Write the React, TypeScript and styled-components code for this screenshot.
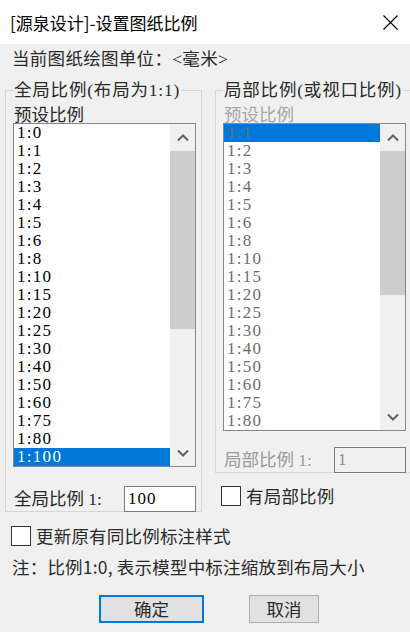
import React from "react";
import styled, { createGlobalStyle } from "styled-components";

const SERIF = `"Liberation Serif", "Noto Sans CJK SC", serif`;
const SANS = `"Noto Sans CJK SC", "Liberation Sans", sans-serif`;

const GlobalStyle = createGlobalStyle`
  html, body { margin: 0; padding: 0; background: #f0f0f0; }
  body { font-family: ${SANS}; }
  * { box-sizing: border-box; }
`;

const Dialog = styled.div`
  width: 410px;
  height: 632px;
  overflow: hidden;
  background: #f0f0f0;
  display: flex;
  flex-direction: column;
`;

const TitleBar = styled.div`
  height: 44px;
  flex: none;
  background: #fff;
  display: flex;
  align-items: center;
  justify-content: space-between;
  padding: 0 12px 0 10px;
`;

const Title = styled.div`
  font-family: ${SANS};
  font-size: 17px;
  line-height: 20px;
  color: #000;
  margin-top: 2px;
`;

const CloseIcon = styled.svg`
  width: 15px;
  height: 15px;
  margin-top: 1px;
`;

const UnitLine = styled.div`
  margin: 4px 0 0 12px;
  height: 22px;
  line-height: 22px;
  font-size: 17.5px;
  font-family: ${SERIF};
  letter-spacing: 0.3px;
  color: #2a2a2a;
`;

const GroupsRow = styled.div`
  display: flex;
  align-items: flex-start;
  gap: 13px;
  margin-top: 9px;
  padding-left: 5px;
`;

const Column = styled.div<{ $w: number }>`
  width: ${(p) => p.$w}px;
  flex: none;
  display: flex;
  flex-direction: column;
`;

const Group = styled.fieldset`
  margin: 0;
  padding: 0 0 0 7px;
  border: 1px solid #d6d6d6;
  min-width: 0;
  width: 100%;
`;

const Legend = styled.legend`
  padding: 0 1px;
  font-family: ${SERIF};
  font-size: 17.5px;
  line-height: 22px;
  letter-spacing: 0.8px;
  color: #2a2a2a;
`;

const Caption = styled.div<{ $disabled?: boolean }>`
  padding-top: 4px;
  height: 22px;
  line-height: 17px;
  font-size: 17.5px;
  padding-left: 1px;
  color: ${(p) => (p.$disabled ? "#a6a6a6" : "#2a2a2a")};
`;

const ListBox = styled.div`
  width: 183px;
  border: 1px solid #828790;
  background: #fff;
  display: flex;
`;

const Items = styled.div`
  flex: 1;
  display: flex;
  flex-direction: column;
`;

const Item = styled.div<{ $selected?: boolean; $disabled?: boolean }>`
  height: 18px;
  line-height: 18px;
  padding-left: 3px;
  font-family: ${SERIF};
  font-size: 17px;
  letter-spacing: 1.3px;
  color: ${(p) =>
    p.$disabled ? "#6d6d6d" : p.$selected ? "#fff" : "#000"};
  background: ${(p) => (p.$selected ? "#0078d7" : "transparent")};
`;

const ScrollBar = styled.div`
  width: 25px;
  flex: none;
  background: #f0f0f0;
  display: flex;
  flex-direction: column;
`;

const ArrowBtn = styled.div`
  height: 27px;
  flex: none;
  display: flex;
  align-items: center;
  justify-content: center;
`;

const Thumb = styled.div`
  flex: none;
  background: #cdcdcd;
`;

const Track = styled.div`
  flex: 1;
`;

const FieldRow = styled.div<{ $gap: number }>`
  display: flex;
  align-items: center;
  justify-content: space-between;
  width: 183px;
  margin-top: ${(p) => p.$gap}px;
  padding-left: 1px;
  margin-bottom: -1px;
`;

const FieldLabel = styled.span<{ $disabled?: boolean }>`
  font-family: ${SERIF};
  font-size: 17.5px;
  line-height: 22px;
  color: ${(p) => (p.$disabled ? "#9a9a9a" : "#2a2a2a")};
`;

const TextInput = styled.input`
  width: 72px;
  height: 26px;
  border: 1px solid #7a7a7a;
  background: #fff;
  padding: 0 0 0 3px;
  margin: 0;
  font-family: ${SERIF};
  font-size: 17px;
  letter-spacing: 1px;
  color: #000;
  outline: none;
  &:disabled {
    background: #f0f0f0;
    color: #8a8a8a;
    border-color: #7a7a7a;
  }
`;

const CheckRow = styled.label<{ $mt: number; $ml: number }>`
  display: flex;
  align-items: center;
  gap: 5px;
  margin-top: ${(p) => p.$mt}px;
  margin-left: ${(p) => p.$ml}px;
  font-size: 17.5px;
  line-height: 22px;
  letter-spacing: 0.2px;
  color: #2a2a2a;
`;

const Box = styled.span`
  width: 20px;
  height: 20px;
  border: 1px solid #333;
  background: #fff;
  flex: none;
`;

const Note = styled.div`
  margin: 9px 0 0 12px;
  height: 22px;
  line-height: 22px;
  font-size: 17.5px;
  letter-spacing: 0.2px;
  color: #2a2a2a;
`;

const ButtonRow = styled.div`
  display: flex;
  gap: 45px;
  margin: 17px 0 0 99px;
`;

const Button = styled.button<{ $w: number; $primary?: boolean }>`
  width: ${(p) => p.$w}px;
  height: 28px;
  padding: 0;
  margin: 0;
  background: #e1e1e1;
  border: ${(p) => (p.$primary ? "2px solid #0078d7" : "1px solid #adadad")};
  font-family: ${SANS};
  font-size: 17.5px;
  line-height: 22px;
  color: #2a2a2a;
`;

const Chevron = ({ down }: { down?: boolean }) => (
  <svg width="12" height="8" viewBox="0 0 12 8">
    <polyline
      points={down ? "1,1.5 6,6.5 11,1.5" : "1,6.5 6,1.5 11,6.5"}
      fill="none"
      stroke="#606060"
      strokeWidth="2"
    />
  </svg>
);

type ListProps = {
  items: string[];
  selected: string;
  disabled?: boolean;
  thumbTop: number;
  thumbHeight: number;
};

const ScaleList = ({ items, selected, disabled, thumbTop, thumbHeight }: ListProps) => (
  <ListBox>
    <Items>
      {items.map((it) => (
        <Item key={it} $selected={it === selected} $disabled={disabled}>
          {it}
        </Item>
      ))}
    </Items>
    <ScrollBar>
      <ArrowBtn>
        <Chevron />
      </ArrowBtn>
      <Thumb style={{ marginTop: thumbTop, height: thumbHeight }} />
      <Track />
      <ArrowBtn>
        <Chevron down />
      </ArrowBtn>
    </ScrollBar>
  </ListBox>
);

const leftItems = [
  "1:0", "1:1", "1:2", "1:3", "1:4", "1:5", "1:6", "1:8", "1:10", "1:15",
  "1:20", "1:25", "1:30", "1:40", "1:50", "1:60", "1:75", "1:80", "1:100",
];
const rightItems = leftItems.slice(1, 18);

export default function App() {
  return (
    <>
      <GlobalStyle />
      <Dialog>
        <TitleBar>
          <Title>[源泉设计]-设置图纸比例</Title>
          <CloseIcon viewBox="0 0 15 15">
            <path d="M0.5 0.5 L14.5 14.5 M14.5 0.5 L0.5 14.5" stroke="#000" strokeWidth="1.1" fill="none" />
          </CloseIcon>
        </TitleBar>
        <UnitLine>当前图纸绘图单位：&lt;毫米&gt;</UnitLine>
        <GroupsRow>
          <Column $w={197}>
            <Group>
              <Legend>全局比例(布局为1:1)</Legend>
              <Caption>预设比例</Caption>
              <ScaleList items={leftItems} selected="1:100" thumbTop={0} thumbHeight={178} />
              <FieldRow $gap={19}>
                <FieldLabel>全局比例 1:</FieldLabel>
                <TextInput defaultValue="100" />
              </FieldRow>
            </Group>
          </Column>
          <Column $w={200}>
            <Group>
              <Legend>局部比例(或视口比例)</Legend>
              <Caption $disabled>预设比例</Caption>
              <ScaleList items={rightItems} selected="1:1" disabled thumbTop={0} thumbHeight={144} />
              <FieldRow $gap={16}>
                <FieldLabel $disabled>局部比例 1:</FieldLabel>
                <TextInput defaultValue="1" disabled />
              </FieldRow>
            </Group>
            <CheckRow $mt={12} $ml={6}>
              <Box />
              有局部比例
            </CheckRow>
          </Column>
        </GroupsRow>
        <CheckRow $mt={13} $ml={11}>
          <Box />
          更新原有同比例标注样式
        </CheckRow>
        <Note>注：比例1:0, 表示模型中标注缩放到布局大小</Note>
        <ButtonRow>
          <Button $w={105} $primary>确定</Button>
          <Button $w={70}>取消</Button>
        </ButtonRow>
      </Dialog>
    </>
  );
}
